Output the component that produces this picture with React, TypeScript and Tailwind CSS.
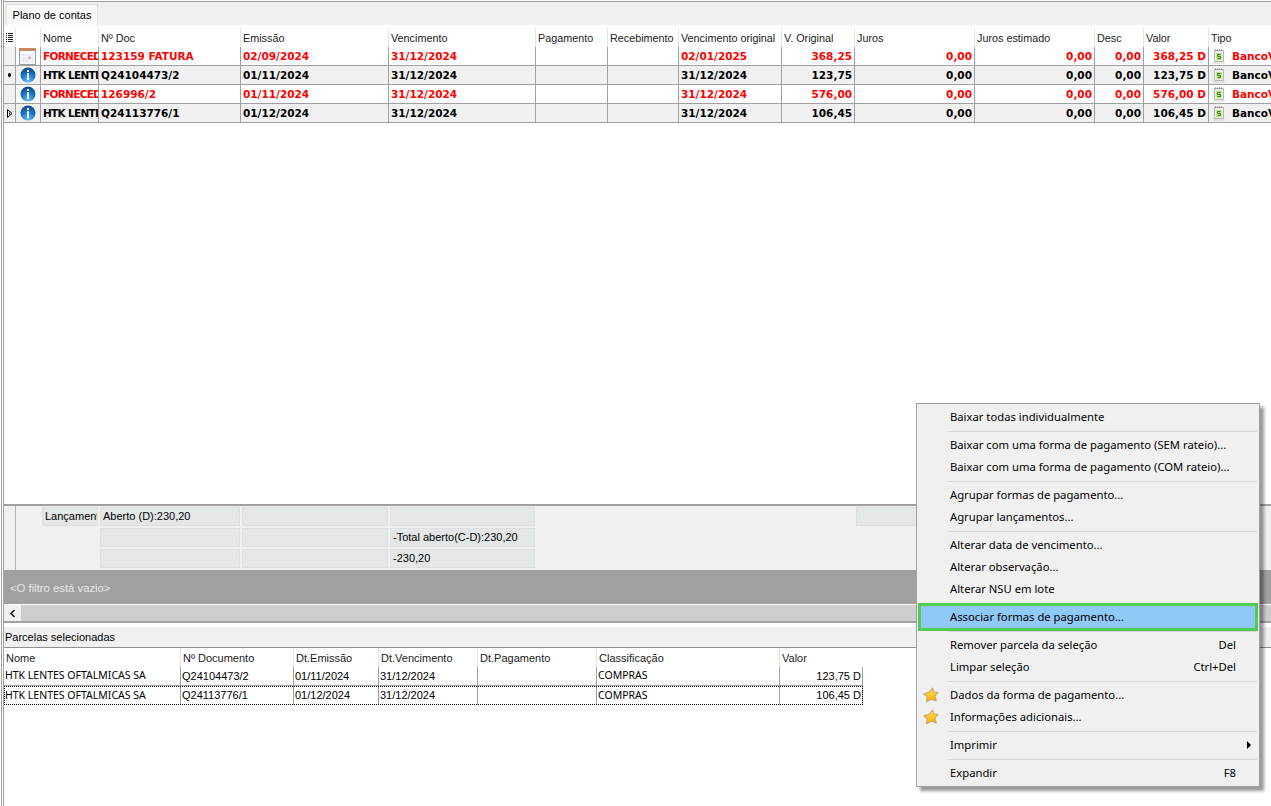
const columns = "grid-cols-[11px_25px_58px_142px_148px_147px_72px_71px_103px_73px_120px_120px_49px_65px_120px]";
const parcelaColumns = "grid-cols-[176px_113px_85px_99px_119px_183px_84px]";

const headers = ["Nome", "Nº Doc", "Emissão", "Vencimento", "Pagamento", "Recebimento", "Vencimento original", "V. Original", "Juros", "Juros estimado", "Desc", "Valor", "Tipo"];

const rows = [
  { red: true, icon: "calendar", mark: "", nome: "FORNECED", doc: "123159 FATURA", emissao: "02/09/2024", venc: "31/12/2024", orig: "02/01/2025", vOrig: "368,25", valor: "368,25 D" },
  { red: false, icon: "info", mark: "dot", nome: "HTK LENTI", doc: "Q24104473/2", emissao: "01/11/2024", venc: "31/12/2024", orig: "31/12/2024", vOrig: "123,75", valor: "123,75 D" },
  { red: true, icon: "info", mark: "", nome: "FORNECED", doc: "126996/2", emissao: "01/11/2024", venc: "31/12/2024", orig: "31/12/2024", vOrig: "576,00", valor: "576,00 D" },
  { red: false, icon: "info", mark: "arrow", nome: "HTK LENTI", doc: "Q24113776/1", emissao: "01/12/2024", venc: "31/12/2024", orig: "31/12/2024", vOrig: "106,45", valor: "106,45 D" },
];

const parcelaHeaders = ["Nome", "Nº Documento", "Dt.Emissão", "Dt.Vencimento", "Dt.Pagamento", "Classificação", "Valor"];

const parcelas = [
  ["HTK LENTES OFTALMICAS SA", "Q24104473/2", "01/11/2024", "31/12/2024", "", "COMPRAS", "123,75 D"],
  ["HTK LENTES OFTALMICAS SA", "Q24113776/1", "01/12/2024", "31/12/2024", "", "COMPRAS", "106,45 D"],
];

type MenuEntry = { label: string; shortcut?: string; star?: boolean; arrow?: boolean; active?: boolean } | "sep";

const menu: MenuEntry[] = [
  { label: "Baixar todas individualmente" },
  "sep",
  { label: "Baixar com uma forma de pagamento (SEM rateio)..." },
  { label: "Baixar com uma forma de pagamento (COM rateio)..." },
  "sep",
  { label: "Agrupar formas de pagamento..." },
  { label: "Agrupar lançamentos..." },
  "sep",
  { label: "Alterar data de vencimento..." },
  { label: "Alterar observação..." },
  { label: "Alterar NSU em lote" },
  "sep",
  { label: "Associar formas de pagamento...", active: true },
  "sep",
  { label: "Remover parcela da seleção", shortcut: "Del" },
  { label: "Limpar seleção", shortcut: "Ctrl+Del" },
  "sep",
  { label: "Dados da forma de pagamento...", star: true },
  { label: "Informações adicionais...", star: true },
  "sep",
  { label: "Imprimir", arrow: true },
  "sep",
  { label: "Expandir", shortcut: "F8" },
];

function InfoIcon() {
  return (
    <svg width="16" height="16" viewBox="0 0 16 16">
      <defs>
        <radialGradient id="infoBall" cx="50%" cy="90%" r="85%">
          <stop offset="0%" stopColor="#6cc0f5" />
          <stop offset="55%" stopColor="#1f76c6" />
          <stop offset="100%" stopColor="#0d4a8c" />
        </radialGradient>
      </defs>
      <circle cx="8" cy="8" r="7.5" fill="url(#infoBall)" />
      <rect x="7" y="3" width="2" height="2" fill="#ffffff" />
      <rect x="7" y="6" width="2" height="7" fill="#e8f4ff" />
    </svg>
  );
}

function CalendarIcon() {
  return (
    <svg width="17" height="17" viewBox="0 0 17 17">
      <rect x="0.5" y="0.5" width="16" height="16" fill="#f6f7fb" stroke="#9a9aa5" />
      <rect x="0" y="0" width="17" height="3" fill="#c9885f" />
      <rect x="3" y="6" width="11" height="8" fill="#dfe3f2" />
      <path d="M3 8.5H14M3 11H14M6 6V14M9 6V14M12 6V14" stroke="#f7f8fc" strokeWidth="1" />
      <rect x="9" y="8.5" width="3" height="2.5" fill="#eab7b7" />
    </svg>
  );
}

function MoneyIcon() {
  return (
    <svg className="shrink-0" width="13" height="15" viewBox="0 0 13 15">
      <path d="M1.5 1.5H10.5V12.5H1.5Z" fill="#eef0ea" stroke="#b4b8b0" />
      <path d="M2.5 0.5V2M4.5 0.5V2M6.5 0.5V2M8.5 0.5V2" stroke="#7f837d" />
      <rect x="3.5" y="4" width="5" height="7" fill="#b7e06f" />
      <path d="M7.5 5.5H4.5V7.5H7.5V9.5H4.5" fill="none" stroke="#2c8a22" strokeWidth="1" />
      <path d="M0 14H12" stroke="#cfcfcf" />
    </svg>
  );
}

function StarIcon() {
  return (
    <svg width="16" height="16" viewBox="0 0 16 16">
      <defs>
        <linearGradient id="starFill" x1="0" y1="0" x2="0" y2="1">
          <stop offset="0%" stopColor="#ffe650" />
          <stop offset="100%" stopColor="#f7ab00" />
        </linearGradient>
      </defs>
      <path
        d="M9.5 1.2L10.6 5L15 5.6L11.9 8.9L13.2 14L8.4 12.2L3.4 14.6L4.3 9.8L0.8 6.8L6 5.4Z"
        fill="url(#starFill)"
        stroke="#cfa96c"
        strokeWidth="1.2"
        strokeLinejoin="round"
      />
    </svg>
  );
}

function RowMark({ kind }: { kind: string }) {
  if (kind === "dot") return <div className="w-[3px] h-[4px] bg-black rounded-full" />;
  if (kind === "arrow") {
    return (
      <svg width="6" height="9" viewBox="0 0 6 9">
        <path d="M0.5 0.5L5 4.5L0.5 8.5Z" fill="#ffffff" stroke="#000000" strokeWidth="1" />
        <rect x="2" y="3.5" width="1" height="2" fill="#000000" />
      </svg>
    );
  }
  return null;
}

export default function App() {
  return (
    <div className="relative w-[1271px] h-[806px] overflow-hidden bg-white pl-px font-['Liberation_Sans',sans-serif] text-[11px] text-black">
      <div className="h-full border-l border-[#a0a0a0] pl-px">
        <div className="h-full border-l border-[#a0a0a0] flex flex-col">
          {/* Plano de contas */}
          <div className="mt-px h-[24px] border-t border-[#a0a0a0] bg-[#f0f0f0] pt-[2px] pl-[2px] shrink-0">
            <div className="w-[92px] h-[21px] bg-[#fafafa] border border-b-0 border-[#dcdcdc] flex items-center justify-center">Plano de contas</div>
          </div>

          <div className="flex-1 min-h-0 overflow-hidden pt-[3px]">
            <div className={`grid ${columns} h-[19px] w-max text-[10.8px]`}>
              <div className="flex items-center justify-center">
                <svg width="7" height="9" viewBox="0 0 7 9">
                  <path d="M0 0.5H1M2 0.5H7M0 2.5H1M2 2.5H7M0 4.5H1M2 4.5H7M0 6.5H1M2 6.5H7M0 8.5H1M2 8.5H7" stroke="#222222" />
                </svg>
              </div>
              <div className="border-l border-[#e4e4e4]" />
              {headers.map((h) => (
                <div key={h} className="pl-[2px] pt-px flex items-center border-l border-[#e4e4e4] text-[#222222] overflow-hidden whitespace-nowrap">{h}</div>
              ))}
            </div>

            {rows.map((r) => {
              const cell = "h-[19px] border-l border-b border-[#a0a0a0] flex items-center overflow-hidden whitespace-nowrap";
              const text = `${cell} pl-[2px] pt-px`;
              const num = `${cell} justify-end pr-[2px] pt-px`;
              return (
                <div
                  key={r.doc}
                  className={`grid ${columns} w-max font-['DejaVu_Sans',sans-serif] font-bold text-[10.5px] ${r.red ? "text-[#ff0000] bg-white" : "text-black bg-[#f0f0f0]"}`}
                >
                  <div className="h-[19px] border-b border-[#a0a0a0] flex items-center justify-center bg-[#f0f0f0]">
                    <RowMark kind={r.mark} />
                  </div>
                  <div className={`${cell} justify-center pr-px`}>
                    {r.icon === "calendar" ? <CalendarIcon /> : <InfoIcon />}
                  </div>
                  <div className={`${text} tracking-[-0.7px]`}>{r.nome}</div>
                  <div className={text}>{r.doc}</div>
                  <div className={text}>{r.emissao}</div>
                  <div className={text}>{r.venc}</div>
                  <div className={text} />
                  <div className={text} />
                  <div className={text}>{r.orig}</div>
                  <div className={num}>{r.vOrig}</div>
                  <div className={num}>0,00</div>
                  <div className={num}>0,00</div>
                  <div className={num}>0,00</div>
                  <div className={num}>{r.valor}</div>
                  <div className={`${cell} pl-[4px] gap-[6px] pt-px`}>
                    <MoneyIcon />
                    <span>BancoV</span>
                  </div>
                </div>
              );
            })}
          </div>

          {/* Totais */}
          <div className="h-[66px] shrink-0 border-t-2 border-[#a0a0a0] bg-[#f0f0f0] overflow-hidden">
            <div className={`grid ${columns} auto-rows-[21px] w-max pt-px`}>
              <div className="col-start-2 row-span-3 h-[64px] -mt-px border-l border-[#b4b4b4]" />
              <div className="col-start-3 ml-[2px] h-[19px] bg-[#e4e7e7] border border-[#dcdfdf] pl-[2px] flex items-center overflow-hidden whitespace-nowrap">Lançament</div>
              <div className="col-start-4 ml-[2px] h-[19px] bg-[#e4e7e7] border border-[#dcdfdf] pl-[2px] flex items-center">Aberto (D):230,20</div>
              <div className="col-start-5 ml-[2px] h-[19px] bg-[#e4e7e7] border border-[#dcdfdf]" />
              <div className="col-start-6 ml-[2px] h-[19px] bg-[#e4e7e7] border border-[#dcdfdf]" />
              <div className="col-start-11 ml-[2px] h-[19px] bg-[#e4e7e7] border border-[#dcdfdf]" />
              <div className="col-start-4 ml-[2px] h-[19px] bg-[#e4e7e7] border border-[#dcdfdf]" />
              <div className="col-start-5 ml-[2px] h-[19px] bg-[#e4e7e7] border border-[#dcdfdf]" />
              <div className="col-start-6 ml-[2px] h-[19px] bg-[#e4e7e7] border border-[#dcdfdf] pl-[2px] flex items-center">-Total aberto(C-D):230,20</div>
              <div className="col-start-4 ml-[2px] h-[19px] bg-[#e4e7e7] border border-[#dcdfdf]" />
              <div className="col-start-5 ml-[2px] h-[19px] bg-[#e4e7e7] border border-[#dcdfdf]" />
              <div className="col-start-6 ml-[2px] h-[19px] bg-[#e4e7e7] border border-[#dcdfdf] pl-[2px] flex items-center">-230,20</div>
            </div>
          </div>

          {/* Filtro */}
          <div className="h-[34px] shrink-0 bg-[#a0a0a0] text-[#e9e9e9] text-[11.3px] pl-[6px] pt-[2px] flex items-center">&lt;O filtro está vazio&gt;</div>
          <div className="h-[17px] shrink-0 border-t border-white bg-[#cdcdcd] flex">
            <div className="w-[17px] bg-[#f0f0f0] flex items-center justify-center">
              <svg width="7" height="9" viewBox="0 0 7 9">
                <path d="M5.5 1L2 4.5L5.5 8" fill="none" stroke="#222222" strokeWidth="1.6" />
              </svg>
            </div>
          </div>
          <div className="h-[2px] shrink-0 bg-[#a0a0a0]" />

          {/* Parcelas selecionadas */}
          <div className="mt-[4px] h-[21px] shrink-0 bg-[#f0f0f0] border-b border-[#8f8f8f] pl-px flex items-center">Parcelas selecionadas</div>
          <div className="h-[158px] shrink-0">
            <div className={`grid ${parcelaColumns} h-[19px] w-max`}>
              {parcelaHeaders.map((h, j) => (
                <div key={h} className={`pt-px pl-[2px] flex items-center text-[#222222] ${j > 0 ? "border-l border-[#e4e4e4]" : ""}`}>{h}</div>
              ))}
            </div>
            {parcelas.map((p, i) => (
              <div
                key={p[1]}
                className={`grid ${parcelaColumns} w-max h-[19px] ${i === 1 ? "outline-1 -outline-offset-1 outline-dotted outline-black" : "border-b border-[#a0a0a0]"}`}
              >
                {p.map((v, j) => (
                  <div
                    key={j}
                    className={`flex items-center border-[#a0a0a0] whitespace-nowrap pl-px ${j > 0 ? "border-l" : ""} ${j === 0 || j === 5 ? "font-['Noto_Sans',sans-serif] text-[10.5px]" : ""} ${j === 6 ? "justify-end pr-px border-r" : ""}`}
                  >
                    {v}
                  </div>
                ))}
              </div>
            ))}
          </div>
        </div>
      </div>

      {/* Menu de contexto */}
      <div className="absolute left-[916px] top-[403px] w-[344px] h-[384px] bg-[#f0f0f0] border border-[#a0a0a0] py-[2px] font-['Noto_Sans',sans-serif] text-[11.25px] shadow-[4px_4px_3px_rgba(0,0,0,0.4)]">
        {menu.map((m, i) => {
          if (m === "sep") {
            return (
              <div key={i} className="h-[6px] pl-[31px] pr-[2px] flex items-center">
                <div className="h-px w-full bg-[#d7d7d7]" />
              </div>
            );
          }
          return (
            <div
              key={m.label}
              className={`relative h-[22px] flex items-center justify-between ${m.active ? "mx-[4px] pl-[29px] bg-[#90c8f6] outline-[3px] outline-solid outline-[#4fcb52]" : "pl-[33px] pr-[23px]"}`}
            >
              {m.star && (
                <div className="absolute left-[6px] top-[3px]">
                  <StarIcon />
                </div>
              )}
              <span>{m.label}</span>
              {m.shortcut && <span>{m.shortcut}</span>}
              {m.arrow && <div className="absolute left-[330px] top-[7px] border-y-[4px] border-l-[4px] border-y-transparent border-l-black" />}
            </div>
          );
        })}
      </div>
    </div>
  );
}
